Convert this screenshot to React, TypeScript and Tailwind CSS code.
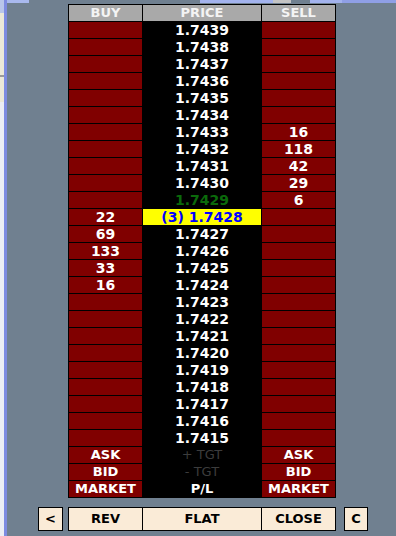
import React from "react";

type Row = { buy?: string; price: string; sell?: string; kind?: "normal" | "green" | "hl" | "tgt" | "pl" };

const prices = [
  "1.7439", "1.7438", "1.7437", "1.7436", "1.7435", "1.7434", "1.7433", "1.7432", "1.7431", "1.7430",
  "1.7429", "(3) 1.7428", "1.7427", "1.7426", "1.7425", "1.7424", "1.7423", "1.7422", "1.7421", "1.7420",
  "1.7419", "1.7418", "1.7417", "1.7416", "1.7415",
];

const sells: Record<string, string> = { "1.7433": "16", "1.7432": "118", "1.7431": "42", "1.7430": "29", "1.7429": "6" };
const buys: Record<string, string> = { "(3) 1.7428": "22", "1.7427": "69", "1.7426": "133", "1.7425": "33", "1.7424": "16" };

const rows: Row[] = [
  ...prices.map((p) => ({
    price: p,
    buy: buys[p],
    sell: sells[p],
    kind: (p === "1.7429" ? "green" : p.startsWith("(3)") ? "hl" : "normal") as Row["kind"],
  })),
  { buy: "ASK", price: "+ TGT", sell: "ASK", kind: "tgt" },
  { buy: "BID", price: "- TGT", sell: "BID", kind: "tgt" },
  { buy: "MARKET", price: "P/L", sell: "MARKET", kind: "pl" },
];

export default function App() {
  return (
    <div
      className="w-[396px] h-[536px] bg-[#708090] flex overflow-hidden"
      style={{ fontFamily: '"DejaVu Sans", Verdana, sans-serif' }}
    >
      <div className="w-[4px] flex flex-col">
        <div className="h-[13px] bg-[#b9c6ea]" />
        <div className="h-[62px] bg-[#ece9d8]" />
        <div className="h-[2px] bg-[#9a9a9a]" />
        <div className="h-[25px] bg-[#ece9d8]" />
        <div className="flex-1 bg-[#eceef4]" />
      </div>
      <div className="w-[3px] bg-[#7d8be0]" />
      <div className="flex-1 flex flex-col">
        <div className="h-[3px] flex">
          <div className="w-[22px] bg-[#a9b9ee]" />
          <div className="w-[171px]" />
          <div className="w-[73px] bg-[#a3b3ee]" />
          <div className="w-[18px] bg-[#c4c4c4]" />
          <div className="w-[19px]" />
          <div className="w-[32px] bg-[#a3b3ee]" />
          <div className="flex-1 bg-[#8f9fe6]" />
        </div>
        <div className="pt-[1px] pl-[61px]">
          <div className="w-[268px] bg-black p-px grid grid-cols-[73px_118px_73px] gap-px font-bold">
            {["BUY", "PRICE", "SELL"].map((h) => (
              <div
                key={h}
                className="h-[16px] bg-[#a9a9a9] text-[#f4f4f4] text-[13px] leading-[16px] text-center"
              >
                {h}
              </div>
            ))}
            {rows.map((r, i) => {
              const side = r.kind === "tgt" || r.kind === "pl" ? "text-[13px]" : "text-[14px]";
              let priceCls = "bg-black text-white text-[14px]";
              if (r.kind === "green") priceCls = "bg-black text-[#0b6a0b] text-[14px]";
              if (r.kind === "hl") priceCls = "bg-[#ffff00] text-[#0000ff] text-[14px]";
              if (r.kind === "tgt") priceCls = "bg-black text-[#3c3c3c] text-[13px] font-normal";
              if (r.kind === "pl") priceCls = "bg-black text-white text-[13px]";
              return (
                <React.Fragment key={i}>
                  <div className={`h-[16px] bg-[#800000] text-white leading-[16px] text-center ${side}`}>
                    {r.buy ?? ""}
                  </div>
                  <div className={`h-[16px] leading-[16px] text-center ${priceCls}`}>{r.price}</div>
                  <div className={`h-[16px] bg-[#800000] text-white leading-[16px] text-center ${side}`}>
                    {r.sell ?? ""}
                  </div>
                </React.Fragment>
              );
            })}
          </div>
        </div>
        <div className="mt-[9px] pl-[31px] flex items-start font-bold text-[13px] text-black">
          <div className="w-[25px] h-[24px] border border-black bg-[#faebd7] flex items-center justify-center">
            &lt;
          </div>
          <div className="ml-[5px] w-[268px] bg-black p-px grid grid-cols-[73px_118px_73px] gap-px">
            <div className="h-[22px] bg-[#faebd7] flex items-center justify-center">REV</div>
            <div className="h-[22px] bg-[#faebd7] flex items-center justify-center">FLAT</div>
            <div className="h-[22px] bg-[#faebd7] flex items-center justify-center">CLOSE</div>
          </div>
          <div className="ml-[8px] w-[24px] h-[24px] border border-black bg-[#faebd7] flex items-center justify-center">
            C
          </div>
        </div>
      </div>
    </div>
  );
}
